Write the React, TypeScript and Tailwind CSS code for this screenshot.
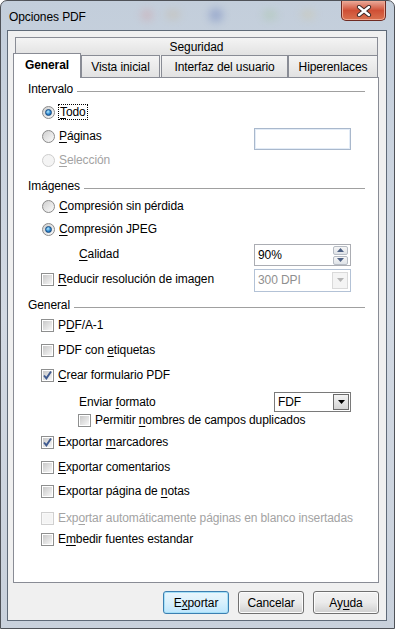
import type { ReactNode } from 'react'

function U({ children }: { children: ReactNode }) {
  return <span className="underline decoration-1 underline-offset-[2px]">{children}</span>
}

function Radio({ checked, disabled }: { checked?: boolean; disabled?: boolean }) {
  return (
    <span
      className={`flex h-[13px] w-[13px] shrink-0 items-center justify-center rounded-full border ${
        disabled
          ? 'border-[#cdcdcd] bg-[#f4f4f4]'
          : 'border-[#8a8a8a] bg-linear-to-br from-[#cfcfcf] to-[#fbfbfb]'
      }`}
    >
      {checked && (
        <span className="h-[7px] w-[7px] rounded-full border border-[#174a80] bg-[radial-gradient(circle_at_40%_35%,#b6ecff,#2c86cf_55%,#12518f)]" />
      )}
    </span>
  )
}

function Check({ checked, disabled }: { checked?: boolean; disabled?: boolean }) {
  return (
    <span
      className={`flex h-[13px] w-[13px] shrink-0 items-center justify-center border ${
        disabled ? 'border-[#d0d0d0] bg-[#f8f8f8]' : 'border-[#8e8f8f] bg-white'
      }`}
    >
      <span
        className={`relative flex h-[9px] w-[9px] items-center justify-center ${
          disabled ? 'bg-[#f4f4f4]' : 'bg-linear-to-br from-[#c8c8c8] to-[#f7f7f7]'
        }`}
      >
        {checked && (
          <svg width="11" height="11" viewBox="0 0 11 11" className="absolute -left-px -top-px">
            <path d="M2 5.5 L4.4 8.4 L9 1.5" fill="none" stroke="#3f5a8f" strokeWidth="1.9" />
          </svg>
        )}
      </span>
    </span>
  )
}

function Heading({ title, className = '' }: { title: string; className?: string }) {
  return (
    <div className={`flex h-[20px] items-center pl-[14px] pr-[13px] ${className}`}>
      <span>{title}</span>
      <span className="ml-[4px] mt-[5px] h-px flex-1 bg-[#a0a0a0]" />
    </div>
  )
}

function Item({
  kind,
  checked,
  disabled,
  children,
  className = '',
}: {
  kind: 'radio' | 'check'
  checked?: boolean
  disabled?: boolean
  children: ReactNode
  className?: string
}) {
  return (
    <div className={`flex h-[20px] items-center pl-[27px] ${className}`}>
      {kind === 'radio' ? (
        <span className="ml-px">
          <Radio checked={checked} disabled={disabled} />
        </span>
      ) : (
        <Check checked={checked} disabled={disabled} />
      )}
      <span className={`ml-[4px] whitespace-nowrap ${disabled ? 'text-[#a3a3a3]' : ''}`}>{children}</span>
    </div>
  )
}

function Tab({ label, w, selected }: { label: string; w: string; selected?: boolean }) {
  return (
    <div
      className={`flex items-center justify-center border border-[#898c95] ${w} ${
        selected
          ? 'relative z-10 -mt-[2px] h-[25px] border-b-0 bg-white pb-[3px] font-bold'
          : 'h-[22px] border-b-0 bg-linear-to-b from-[#f4f4f4] to-[#e2e2e2]'
      }`}
    >
      {label}
    </div>
  )
}

function Button({ children, primary }: { children: ReactNode; primary?: boolean }) {
  return (
    <div
      className={`flex h-[23px] w-[66px] items-center justify-center rounded-[3px] border ${
        primary
          ? 'border-[#3c7fb1] bg-linear-to-b from-[#eaf6fd] via-[#d9f0fc] to-[#bee6fd] shadow-[inset_0_0_0_1px_#a6e0f7]'
          : 'border-[#707070] bg-linear-to-b from-[#f2f2f2] via-[#ebebeb] to-[#cfcfcf] shadow-[inset_0_0_0_1px_#fcfcfc]'
      }`}
    >
      {children}
    </div>
  )
}

export default function App() {
  return (
    <div className="h-[629px] w-[395px] overflow-hidden bg-white font-['Liberation_Sans',Arial,sans-serif] text-[12px] tracking-[-0.1px] text-black">
      <div className="relative flex h-[629px] w-[395px] flex-col rounded-t-[7px] border border-[#4f5258] bg-linear-to-b from-[#c3cedb] via-[#d2d9e3] to-[#c9d1dc]">
        {/* blurred glass spots */}
        <div className="absolute left-[140px] top-[8px] h-[12px] w-[12px] rounded-full bg-[#d98a8a] opacity-30 blur-[4px]" />
        <div className="absolute left-[165px] top-[9px] h-[9px] w-[14px] rounded-full bg-[#c9a872] opacity-25 blur-[4px]" />
        <div className="absolute left-[208px] top-[7px] h-[14px] w-[14px] rounded-full bg-[#5c74b8] opacity-40 blur-[4px]" />
        <div className="absolute left-[262px] top-[9px] h-[10px] w-[14px] rounded-full bg-[#8fbf7a] opacity-25 blur-[4px]" />
        <div className="absolute left-[300px] top-[9px] h-[9px] w-[14px] rounded-full bg-[#d6c27a] opacity-25 blur-[4px]" />

        {/* title bar */}
        <div className="relative flex h-[29px] items-start justify-between">
          <span className="pl-[8px] pt-[9px] text-[12px] leading-[14px]">Opciones PDF</span>
          <div className="mr-[8px] flex h-[20px] w-[45px] items-center justify-center rounded-b-[5px] border border-t-0 border-[#6e2a22] bg-linear-to-b from-[#e9a99a] via-[#cf4f35] to-[#d9714f] shadow-[inset_0_0_0_1px_#efa791]">
            <svg width="16" height="12" viewBox="0 0 16 12">
              <path d="M3 2 L13 10 M13 2 L3 10" stroke="#3a2624" strokeWidth="4.2" strokeLinecap="round" />
              <path d="M3 2 L13 10 M13 2 L3 10" stroke="#ffffff" strokeWidth="2.4" strokeLinecap="round" />
            </svg>
          </div>
        </div>

        {/* client area */}
        <div className="ml-[6px] flex h-[591px] w-[380px] flex-col border border-[#5f6a78] bg-[#f0f0f0] pl-[5px] pt-[6px]">
          {/* tabs */}
          <div className="ml-[2px] flex h-[18px] w-[363px] items-center justify-center border border-b-0 border-[#898c95] bg-linear-to-b from-[#f4f4f4] to-[#e2e2e2]">
            Seguridad
          </div>
          <div className="flex h-[22px] items-start">
            <Tab label="General" w="w-[68px]" selected />
            <Tab label="Vista inicial" w="w-[79px]" />
            <div className="w-px" />
            <Tab label="Interfaz del usuario" w="w-[127px]" />
            <Tab label="Hiperenlaces" w="w-[90px]" />
          </div>

          {/* panel */}
          <div className="flex h-[506px] w-[366px] flex-col border border-[#898c95] bg-white pt-[1px]">
            <Heading title="Intervalo" />
            <div className="mt-[3px] flex h-[20px] items-center pl-[27px]">
              <span className="ml-px">
                <Radio checked />
              </span>
              <span className="ml-[3px] border border-dotted border-black px-[1px] leading-[14px]">
                <U>T</U>odo
              </span>
            </div>
            <div className="mt-[4px] flex h-[20px] items-center">
              <div className="w-[240px]">
                <Item kind="radio">
                  <U>P</U>áginas
                </Item>
              </div>
              <div className="mt-[6px] h-[22px] w-[97px] border border-[#a9b8cc] bg-white shadow-[inset_0_0_0_1px_#e3ecf7]" />
            </div>
            <Item kind="radio" disabled className="mt-[4px]">
              <U>S</U>elección
            </Item>

            <Heading title="Imágenes" className="mt-[6px]" />
            <Item kind="radio">
              <U>C</U>ompresión sin pérdida
            </Item>
            <Item kind="radio" checked className="mt-[3px]">
              <U>C</U>ompresión JPEG
            </Item>
            <div className="mt-[5px] flex h-[20px] items-center">
              <div className="w-[240px] pl-[65px]">
                <U>C</U>alidad
              </div>
              <div className="mt-[2px] flex h-[22px] w-[97px] items-center justify-between border border-[#abadb3] bg-white pl-[3px] pr-[2px]">
                <span>90%</span>
                <div className="flex flex-col gap-px">
                  <div className="flex h-[9px] w-[15px] items-center justify-center rounded-[2px] border border-[#b7bcc4] bg-linear-to-b from-[#f6f6f6] to-[#dfe3e8]">
                    <svg width="7" height="4" viewBox="0 0 7 4">
                      <path d="M0 4 L3.5 0 L7 4 Z" fill="#4d6185" />
                    </svg>
                  </div>
                  <div className="flex h-[9px] w-[15px] items-center justify-center rounded-[2px] border border-[#b7bcc4] bg-linear-to-b from-[#f6f6f6] to-[#dfe3e8]">
                    <svg width="7" height="4" viewBox="0 0 7 4">
                      <path d="M0 0 L3.5 4 L7 0 Z" fill="#4d6185" />
                    </svg>
                  </div>
                </div>
              </div>
            </div>
            <div className="mt-[5px] flex h-[20px] items-center">
              <div className="w-[240px]">
                <Item kind="check">
                  <U>R</U>educir resolución de imagen
                </Item>
              </div>
              <div className="mt-[2px] flex h-[23px] w-[97px] items-center justify-between border border-[#b3c2d6] bg-white pl-[3px] pr-[2px] text-[#8f8f8f]">
                <span>300 DPI</span>
                <div className="flex h-[17px] w-[16px] items-center justify-center border border-[#dadada] bg-[#f4f4f4]">
                  <svg width="7" height="4" viewBox="0 0 7 4">
                    <path d="M0 0 L3.5 4 L7 0 Z" fill="#b5b5b5" />
                  </svg>
                </div>
              </div>
            </div>

            <Heading title="General" className="mt-[6px]" />
            <Item kind="check">
              P<U>D</U>F/A-1
            </Item>
            <Item kind="check" className="mt-[5px]">
              PDF con <U>e</U>tiquetas
            </Item>
            <Item kind="check" checked className="mt-[5px]">
              <U>C</U>rear formulario PDF
            </Item>
            <div className="mt-[7px] flex h-[20px] items-center">
              <div className="w-[260px] pl-[65px]">
                Enviar <U>f</U>ormato
              </div>
              <div className="flex h-[20px] w-[77px] items-center justify-between border border-[#7a7a7a] bg-white pl-[3px] pr-px">
                <span>FDF</span>
                <div className="flex h-[16px] w-[16px] items-center justify-center border border-[#6b6b6b] bg-linear-to-b from-[#f4f4f4] to-[#d4d4d4]">
                  <svg width="7" height="4" viewBox="0 0 7 4">
                    <path d="M0 0 L3.5 4 L7 0 Z" fill="#000" />
                  </svg>
                </div>
              </div>
            </div>
            <div className="flex h-[16px] items-center pl-[64px]">
              <Check />
              <span className="ml-[4px] whitespace-nowrap">
                Permitir <U>n</U>ombres de campos duplicados
              </span>
            </div>
            <Item kind="check" checked className="mt-[4px]">
              Exportar <U>m</U>arcadores
            </Item>
            <Item kind="check" className="mt-[5px]">
              <U>E</U>xportar comentarios
            </Item>
            <Item kind="check" className="mt-[4px]">
              Exportar página de <U>n</U>otas
            </Item>
            <Item kind="check" disabled className="mt-[7px]">
              Exp<U>o</U>rtar automáticamente páginas en blanco insertadas
            </Item>
            <Item kind="check" className="mt-px">
              E<U>m</U>bedir fuentes estandar
            </Item>
          </div>

          {/* buttons */}
          <div className="mt-[8px] flex w-[366px] justify-end gap-[9px]">
            <Button primary>
              E<U>x</U>portar
            </Button>
            <Button>Cancelar</Button>
            <Button>
              Ay<U>u</U>da
            </Button>
          </div>
        </div>
      </div>
    </div>
  )
}
